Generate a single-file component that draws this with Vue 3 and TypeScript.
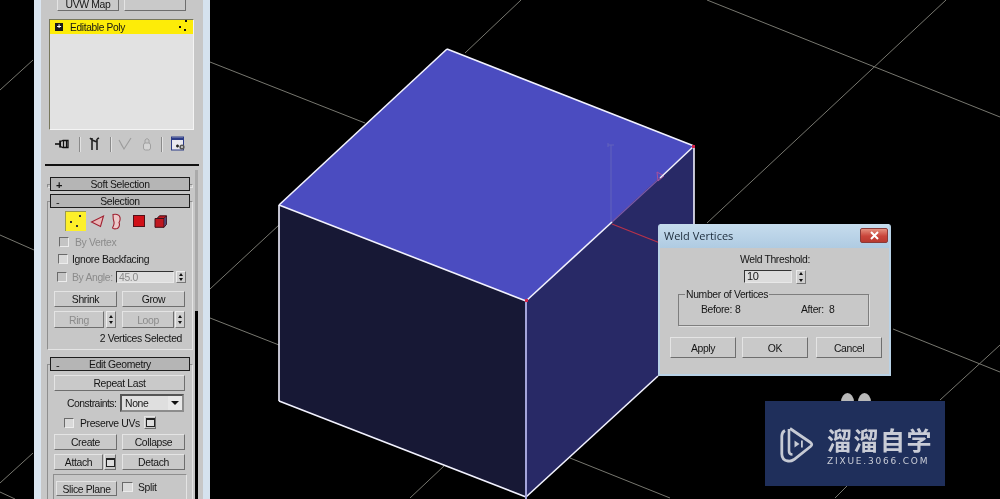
<script setup lang="ts">
// 视口里的栅格线，坐标就是内容本身
const gridLines: number[][] = [
  [0, 90, 33, 60],
  [0, 235, 34, 250],
  [0, 483, 33, 453],
  [0, 492, 15, 499],
  [210, 62, 365, 123],
  [465, 53, 521, 0],
  [210, 289, 279, 225],
  [210, 318, 279, 345],
  [410, 498, 444, 466],
  [570, 458, 670, 498],
  [707, 0, 1000, 117],
  [946, 0, 707, 223],
  [893, 329, 1000, 372],
  [1000, 345, 940, 400],
  [847, 486, 835, 498],
];
const cubeEdges: number[][] = [
  [447, 49, 694, 146],
  [447, 49, 279, 205],
  [694, 146, 660, 178],
  [279, 205, 526, 301],
  [526, 301, 612, 222],
  [279, 205, 279, 401],
  [279, 401, 526, 497],
  [526, 497, 658, 376],
  [694, 146, 694, 224],
];
</script>

<template>
  <div class="screen">
    <svg class="viewport" width="1000" height="499" viewBox="0 0 1000 499">
      <line v-for="(l, i) in gridLines" :key="'g' + i" :x1="l[0]" :y1="l[1]" :x2="l[2]" :y2="l[3]" stroke="#77776f" stroke-width="1"/>
      <polygon points="447,49 694,146 526,301 279,205" fill="#4b4cc0"/>
      <polygon points="279,205 526,301 526,497 279,401" fill="#171835"/>
      <polygon points="526,301 694,146 694,343 526,497" fill="#282966"/>
      <line x1="612" y1="222" x2="660" y2="178" stroke="#7c5aa8" stroke-width="1.2"/>
      <line x1="611" y1="145" x2="611" y2="223" stroke="#6262bc" stroke-width="1"/>
      <path d="M608 145h6M608 143v4" stroke="#6262bc" stroke-width="1" fill="none"/>
      <path d="M657 172l7 4-6 5z" stroke="#a8509c" stroke-width="1" fill="none"/>
      <line x1="612" y1="224" x2="660" y2="243" stroke="#b8324a" stroke-width="1.2"/>
      <line v-for="(l, i) in cubeEdges" :key="'e' + i" :x1="l[0]" :y1="l[1]" :x2="l[2]" :y2="l[3]" stroke="#f2f2ff" stroke-width="1.6"/>
      <line x1="526" y1="302" x2="526" y2="499" stroke="#a4a4da" stroke-width="2"/>
      <rect x="525" y="299" width="3" height="3" fill="#d8254a"/>
      <rect x="692" y="145" width="3" height="3" fill="#d8254a"/>
    </svg>

    <aside class="cmd-panel">
      <div class="cmd-edge"></div>
      <div class="cmd-body">
        <div class="mod-buttons">
          <div class="btn mod-btn">UVW Map</div>
          <div class="btn mod-btn"></div>
        </div>

        <div class="stack-list">
          <div class="stack-row">
            <span class="stack-plus">+</span>
            <span class="stack-name">Editable Poly</span>
            <svg class="stack-dots" width="20" height="14" viewBox="0 0 20 14">
              <rect x="14" y="1" width="2" height="2" fill="#111"/>
              <rect x="8" y="7" width="2" height="2" fill="#111"/>
              <rect x="13" y="10" width="2" height="2" fill="#111"/>
            </svg>
          </div>
        </div>

        <div class="stack-tools">
          <svg width="16" height="16" viewBox="0 0 16 16">
            <path d="M1 8h5" stroke="#111" stroke-width="1.6" fill="none"/>
            <path d="M6 4.500v7" stroke="#111" stroke-width="1.6" fill="none"/>
            <path d="M6.500 5.500L9 4.500h5v7H9l-2.500-1z" fill="#ddd" stroke="#111" stroke-width="1.3"/>
            <path d="M9.500 5v6M12.500 5v6" stroke="#111" stroke-width="1.400"/>
          </svg>
          <i class="tool-sep"></i>
          <svg width="12" height="16" viewBox="0 0 12 16">
            <path d="M3 2v12M8 3v11M3 4l5 2M1 2l2 2M8 3l2-1" stroke="#222" stroke-width="1.6" fill="none"/>
          </svg>
          <i class="tool-sep"></i>
          <svg width="15" height="16" viewBox="0 0 15 16">
            <path d="M1 4l5 9 7-11M3 8l3 5" stroke="#9c9c9c" stroke-width="1.1" fill="none"/>
          </svg>
          <svg width="10" height="16" viewBox="0 0 10 16">
            <path d="M3 7V4q2-3 4 0v3" stroke="#a0a0a0" fill="none"/>
            <rect x="1.5" y="7" width="7" height="7" rx="2" fill="#d4d4d4" stroke="#a0a0a0"/>
          </svg>
          <i class="tool-sep"></i>
          <svg width="15" height="16" viewBox="0 0 15 16">
            <rect x="0.5" y="1" width="12" height="13" fill="#e8e8f0" stroke="#2c3c88"/>
            <rect x="1" y="1.5" width="11" height="2.5" fill="#2c3c88"/>
            <path d="M5 10h3M6.500 8.500v3" stroke="#222" stroke-width="1.4"/>
            <circle cx="11" cy="11" r="2.600" fill="#555"/>
            <circle cx="11" cy="11" r="1" fill="#ddd"/>
          </svg>
        </div>
        <div class="stack-rule"></div>

        <div class="rollout-area">
          <div class="rollouts">
            <section class="rollout closed">
              <div class="bar"><b class="plus">+</b><span>Soft Selection</span></div>
            </section>

            <section class="rollout">
              <div class="bar"><b>-</b><span>Selection</span></div>
              <div class="sel-icons">
                <svg class="sel-active" width="21" height="20" viewBox="0 0 21 20">
                  <rect x="14" y="4" width="2" height="2" fill="#333"/>
                  <rect x="5" y="10" width="2" height="2" fill="#333"/>
                  <rect x="11" y="14" width="2" height="2" fill="#333"/>
                </svg>
                <svg width="15" height="14" viewBox="0 0 15 14">
                  <path d="M1.500 8L13.500 2 10.500 12.500z" fill="#e8b8b8" stroke="#a02030" stroke-width="1.1"/>
                </svg>
                <svg width="11" height="17" viewBox="0 0 11 17">
                  <path d="M2 1.500q6-1 7 3 .5 3-1 5 1.500 3.500-1.500 6-4 1-5-.5 2-3.500 1.500-6Q2 6 2 1.500z" fill="#eccaca" stroke="#a02030" stroke-width="1.1"/>
                </svg>
                <svg width="12" height="12" viewBox="0 0 12 12">
                  <rect x="0.500" y="0.500" width="11" height="11" fill="#d01018" stroke="#501018"/>
                </svg>
                <svg width="13" height="13" viewBox="0 0 13 13">
                  <path d="M3 3.500L5.500.8h7v8.500L10 12.300H1V3.500z" fill="#c01820" stroke="#40101a"/>
                  <path d="M1 3.500h9V12.300M10 3.500l2.500-2.700" stroke="#40101a" fill="none"/>
                  <path d="M10.300 3.800l2-2.400v7.700l-2 2.500z" fill="#4a4a7a"/>
                </svg>
              </div>
              <div class="opt-row by-vertex"><i class="check off"></i><span class="off-text">By Vertex</span></div>
              <div class="opt-row ignore"><i class="check"></i><span>Ignore Backfacing</span></div>
              <div class="opt-row by-angle">
                <i class="check off"></i><span class="off-text angle-label">By Angle:</span>
                <div class="field off-text angle-field">45.0</div>
                <div class="spin"></div>
              </div>
              <div class="btn-row first">
                <div class="btn half">Shrink</div>
                <div class="btn half">Grow</div>
              </div>
              <div class="btn-row ring-row">
                <div class="btn off-text ring">Ring</div>
                <div class="spin tall"></div>
                <div class="btn off-text loop">Loop</div>
                <div class="spin tall loop-spin"></div>
              </div>
              <div class="status">2 Vertices Selected</div>
            </section>

            <section class="rollout geometry">
              <div class="bar"><b>-</b><span>Edit Geometry</span></div>
              <div class="btn wide">Repeat Last</div>
              <div class="constraints">
                <span class="constraints-label">Constraints:</span>
                <div class="select"><span>None</span><i class="arrow"></i></div>
              </div>
              <div class="preserve">
                <i class="check"></i><span class="preserve-label">Preserve UVs</span>
                <div class="win-btn"><i></i></div>
              </div>
              <div class="btn-row create-row">
                <div class="btn half">Create</div>
                <div class="btn half">Collapse</div>
              </div>
              <div class="btn-row attach-row">
                <div class="btn attach">Attach</div>
                <div class="win-btn attach-win"><i></i></div>
                <div class="btn half detach">Detach</div>
              </div>
              <div class="slice-group">
                <div class="btn slice">Slice Plane</div>
                <i class="check split-check"></i><span class="split-label">Split</span>
              </div>
            </section>
          </div>
          <div class="scroller"><div class="scroll-thumb"></div></div>
        </div>
      </div>
      <div class="cmd-edge right"></div>
    </aside>

    <div class="dialog">
      <header class="dlg-title">
        <span>Weld Vertices</span>
        <div class="dlg-close">
          <svg width="11" height="9" viewBox="0 0 11 9"><path d="M2 1l7 7M9 1L2 8" stroke="#fff" stroke-width="2"/></svg>
        </div>
      </header>
      <div class="dlg-client">
        <div class="dlg-label">Weld Threshold:</div>
        <div class="dlg-threshold">
          <div class="field dlg-field">10</div>
          <div class="spin"></div>
        </div>
        <fieldset class="dlg-group">
          <legend>Number of Vertices</legend>
          <div class="dlg-counts">
            <span class="count-before">Before:</span><span class="count-num">8</span>
            <span class="count-after">After:</span><span class="count-num">8</span>
          </div>
        </fieldset>
        <div class="dlg-buttons">
          <div class="btn">Apply</div>
          <div class="btn">OK</div>
          <div class="btn">Cancel</div>
        </div>
      </div>
    </div>

    <i class="ear left-ear"></i><i class="ear right-ear"></i>
    <div class="watermark">
      <svg class="wm-icon" width="34" height="37" viewBox="0 0 34 37">
        <path d="M10 2.500L30.500 16.500Q33 18.500 30.500 20.500L14 33.500Q11 35.500 8 35Q2 34.500 1.800 28V10Q2 6 5 4.500" fill="none" stroke="#c6cad4" stroke-width="2.800"/>
        <path d="M9 3V25Q9 28.500 12.500 28.500" fill="none" stroke="#c6cad4" stroke-width="2.600"/>
        <path d="M14.500 14.500L19.500 18 14.500 21.500z" fill="#c6cad4"/>
        <rect x="21" y="14.500" width="1.800" height="7" fill="#c6cad4"/>
      </svg>
      <div class="wm-text">
        <div class="wm-name">溜溜自学</div>
        <div class="wm-url">ZIXUE.3066.COM</div>
      </div>
    </div>
  </div>
</template>

<style scoped>
.screen {
  position: relative;
  display: flex;
  width: 1000px;
  height: 499px;
  padding-left: 34px;
  box-sizing: border-box;
  overflow: hidden;
  background: #000;
  font-family: "Liberation Sans", Arial, sans-serif;
  font-size: 10.4px;
  letter-spacing: -0.35px;
  color: #151515;
  filter: blur(0.3px);
}

.viewport {
  position: absolute;
  left: 0;
  top: 0;
}

.cmd-panel {
  position: relative;
  display: flex;
  width: 176px;
  height: 499px;
  flex: none;
  overflow: hidden;
}

.cmd-edge {
  width: 7px;
  background: #dbe6f1;
  flex: none;
}

.cmd-edge.right {
  width: 7px;
  background: #d5e2ee;
}

.cmd-body {
  width: 162px;
  background: #c7c7c7;
}

.btn {
  display: flex;
  align-items: center;
  justify-content: center;
  box-sizing: border-box;
  padding-top: 1px;
  background: #c9c9c9;
  border: 1px solid;
  border-color: #e4e4e4 #6e6e6e #6e6e6e #e4e4e4;
  white-space: nowrap;
}

.mod-buttons {
  display: flex;
  gap: 5px;
  height: 11px;
  margin-left: 16px;
}

.mod-btn {
  width: 62px;
  border-top: 0;
  align-items: flex-end;
  line-height: 10px;
}

.stack-list {
  box-sizing: border-box;
  width: 145px;
  height: 111px;
  margin: 8px 0 0 8px;
  background: #e2e2e2;
  border: 1px solid;
  border-color: #77775c #f4f4f4 #f4f4f4 #77775c;
}

.stack-row {
  position: relative;
  display: flex;
  align-items: center;
  height: 14px;
  background: #fdec08;
}

.stack-plus {
  width: 8px;
  height: 8px;
  margin-left: 5px;
  background: #1a1a1a;
  color: #fff;
  font: bold 8px/8px "Liberation Sans", sans-serif;
  text-align: center;
}

.stack-name {
  margin-left: 7px;
  font-size: 10.200px;
}

.stack-dots {
  position: absolute;
  right: 2px;
  top: -1px;
}

.stack-tools {
  display: flex;
  align-items: center;
  height: 16px;
  margin: 6px 0 0 13px;
}

.stack-tools > svg:nth-of-type(2) {
  margin-left: 9px;
}

.stack-tools > svg:nth-of-type(3) {
  margin-left: 7px;
}

.stack-tools > svg:nth-of-type(4) {
  margin-left: 9px;
}

.stack-tools > svg:nth-of-type(5) {
  margin-left: 9px;
}

.tool-sep {
  width: 1px;
  height: 15px;
  margin-left: 9px;
  background: #8a8a8a;
  box-shadow: 1px 0 #e2e2e2;
}

.stack-rule {
  width: 154px;
  height: 2px;
  margin: 12px 0 0 4px;
  background: #111;
}

.rollout-area {
  display: flex;
}

.rollouts {
  width: 154px;
  padding-top: 11px;
}

.rollout {
  position: relative;
  box-sizing: border-box;
  width: 146px;
  margin-left: 6px;
  padding-bottom: 5px;
}

.rollout::before {
  content: "";
  position: absolute;
  left: 0;
  right: 0;
  top: 7px;
  bottom: 0;
  border: 1px solid;
  border-color: #8e8e8e #e4e4e4 #e4e4e4 #8e8e8e;
}

.rollout > * {
  position: relative;
}

.rollout.closed {
  padding-bottom: 3px;
  height: 17px;
}

.rollout.closed::before {
  bottom: 6px;
}

.geometry {
  margin-top: 7px;
  height: 150px;
}

.bar {
  display: flex;
  align-items: center;
  justify-content: center;
  box-sizing: border-box;
  height: 14px;
  margin: 0 3px;
  padding-top: 1px;
  background: #b5b5b5;
  border: 1px solid #1d1d1d;
}

.bar b {
  position: absolute;
  left: 5px;
  font-weight: normal;
  font-size: 11px;
}

.bar b.plus {
  font-weight: bold;
}

.sel-icons {
  display: flex;
  align-items: center;
  height: 20px;
  margin-top: 3px;
  padding-left: 18px;
}

.sel-icons svg:nth-child(2) {
  margin-left: 4px;
}

.sel-icons svg:nth-child(3) {
  margin-left: 6px;
}

.sel-icons svg:nth-child(4) {
  margin-left: 11px;
}

.sel-icons svg:nth-child(5) {
  margin-left: 9px;
}

.sel-active {
  background: #fdf02a;
  box-shadow: inset 1px 1px #9a9a50;
}

.check {
  display: block;
  flex: none;
  box-sizing: border-box;
  width: 10px;
  height: 10px;
  background: #d9d9d9;
  border: 1px solid;
  border-color: #6a6a6a #ececec #ececec #6a6a6a;
}

.check.off {
  background: #c4c4c4;
}

.off-text {
  color: #8b8b8b;
}

.opt-row {
  display: flex;
  align-items: center;
  white-space: nowrap;
}

.opt-row span {
  padding-top: 1px;
}

.by-vertex {
  height: 10px;
  margin-top: 6px;
  padding-left: 12px;
  gap: 6px;
}

.ignore {
  height: 10px;
  margin-top: 7px;
  padding-left: 11px;
  gap: 4px;
}

.by-angle {
  height: 12px;
  margin-top: 7px;
  padding-left: 10px;
}

.angle-label {
  flex: none;
  width: 39px;
  margin: 0 5px;
}

.field {
  box-sizing: border-box;
  background: #dedede;
  border: 1px solid;
  border-color: #333 #e8e8e8 #e8e8e8 #333;
  line-height: 11px;
  padding-left: 2px;
}

.angle-field {
  width: 58px;
  height: 12px;
}

.spin {
  position: relative;
  flex: none;
  box-sizing: border-box;
  width: 10px;
  height: 12px;
  margin-left: 2px;
  background: #cfcfcf;
  border: 1px solid;
  border-color: #ececec #777 #777 #ececec;
}

.spin::before,
.spin::after {
  content: "";
  position: absolute;
  left: 1.500px;
  border-left: 2.500px solid transparent;
  border-right: 2.500px solid transparent;
}

.spin::before {
  top: 1px;
  border-bottom: 3px solid #111;
}

.spin::after {
  bottom: 1px;
  border-top: 3px solid #111;
}

.spin.tall {
  height: 17px;
}

.spin.tall::before {
  top: 3px;
}

.spin.tall::after {
  bottom: 3px;
}

.btn-row {
  display: flex;
  padding-left: 7px;
}

.btn-row.first {
  height: 16px;
  margin-top: 8px;
  gap: 5px;
}

.half {
  width: 63px;
}

.ring-row {
  height: 17px;
  margin-top: 4px;
}

.ring {
  width: 50px;
}

.loop {
  width: 52px;
  margin-left: 6px;
}

.loop-spin {
  margin-left: 1px;
}

.status {
  height: 12px;
  margin-top: 4px;
  padding-top: 1px;
  padding-right: 11px;
  line-height: 12px;
  text-align: right;
}

.wide {
  width: 131px;
  height: 16px;
  margin: 4px 0 0 7px;
}

.constraints {
  display: flex;
  align-items: center;
  height: 18px;
  margin-top: 3px;
  padding-left: 20px;
}

.constraints-label {
  flex: none;
  width: 48px;
  letter-spacing: -0.5px;
  white-space: nowrap;
}

.select {
  display: flex;
  align-items: center;
  box-sizing: border-box;
  flex: none;
  width: 64px;
  height: 18px;
  margin-left: 5px;
  padding-left: 3px;
  background: #dfdfdf;
  border: 2px solid;
  border-color: #555 #8c8c8c #8c8c8c #555;
}

.arrow {
  position: relative;
  margin-left: auto;
  width: 14px;
  height: 14px;
  background: #e8e8e8;
}

.arrow::after {
  content: "";
  position: absolute;
  left: 3px;
  top: 5px;
  border-left: 4px solid transparent;
  border-right: 4px solid transparent;
  border-top: 4px solid #111;
}

.preserve {
  display: flex;
  align-items: center;
  height: 13px;
  margin-top: 4px;
  padding-left: 17px;
  gap: 6px;
}

.preserve-label {
  flex: none;
  width: 57px;
  padding-top: 1px;
  white-space: nowrap;
}

.win-btn {
  display: flex;
  align-items: center;
  justify-content: center;
  box-sizing: border-box;
  flex: none;
  width: 12px;
  height: 13px;
  margin-left: 1px;
  background: #c9c9c9;
  border: 1px solid;
  border-color: #e4e4e4 #6e6e6e #6e6e6e #e4e4e4;
}

.win-btn i {
  display: block;
  box-sizing: border-box;
  width: 9px;
  height: 9px;
  background: #ddd;
  border: 1px solid #222;
  border-top-width: 2px;
}

.create-row {
  height: 16px;
  margin-top: 5px;
  gap: 5px;
}

.attach-row {
  height: 16px;
  margin-top: 4px;
}

.attach {
  width: 49px;
}

.attach-win {
  height: 16px;
  margin-left: 1px;
}

.detach {
  margin-left: 6px;
}

.slice-group {
  display: flex;
  align-items: flex-start;
  box-sizing: border-box;
  width: 134px;
  height: 40px;
  margin: 4px 0 0 6px;
  padding: 6px 0 0 2px;
  border: 1px solid;
  border-color: #8e8e8e #e4e4e4 #e4e4e4 #8e8e8e;
}

.slice {
  width: 61px;
  height: 15px;
}

.split-check {
  width: 11px;
  height: 10px;
  margin: 1px 5px 0 5px;
}

.split-label {
  padding-top: 1px;
}

.scroller {
  width: 3px;
  height: 332px;
  margin-top: 4px;
  background: #000;
}

.scroll-thumb {
  height: 141px;
  background: #aaa;
}

.dialog {
  position: absolute;
  left: 658px;
  top: 224px;
  box-sizing: border-box;
  width: 233px;
  height: 152px;
  background: #b9d2e6;
  border-radius: 3px 3px 0 0;
  padding: 0 2px 2px;
  font-size: 10.4px;
}

.dlg-title {
  display: flex;
  align-items: center;
  justify-content: space-between;
  height: 22px;
  padding: 0 1px 2px 4px;
  background: linear-gradient(#c6dced, #afcbe2);
  color: #1c2b3a;
  font-family: "Open Sans", "Liberation Sans", sans-serif;
  font-size: 11px;
  letter-spacing: 0;
}

.dlg-close {
  display: flex;
  align-items: center;
  justify-content: center;
  box-sizing: border-box;
  width: 28px;
  height: 15px;
  background: linear-gradient(#e58f7e, #c9443a 55%, #b83a30);
  border: 1px solid #8a3a38;
  border-radius: 2px;
}

.dlg-client {
  height: 126px;
  padding-top: 6px;
  box-sizing: border-box;
  background: #c8c8c8;
}

.dlg-label {
  height: 12px;
  line-height: 12px;
  text-align: center;
  padding-left: 1px;
}

.dlg-threshold {
  display: flex;
  height: 13px;
  margin: 4px 0 0 84px;
}

.dlg-field {
  width: 48px;
  height: 13px;
  font-size: 11px;
  background: #dcdcdc;
}

.dlg-threshold .spin {
  height: 14px;
  margin-left: 4px;
}

.dlg-group {
  box-sizing: border-box;
  width: 191px;
  height: 37px;
  margin: 6px 0 0 18px;
  padding: 0;
  border: 1px solid #7e7e7e;
  border-radius: 0;
  box-shadow: 1px 1px #dedede;
}

.dlg-group legend {
  margin-left: 6px;
  padding: 0 1px;
  line-height: 11px;
}

.dlg-counts {
  display: flex;
  height: 14px;
  padding-top: 3px;
  line-height: 14px;
}

.count-before {
  width: 34px;
  margin-left: 22px;
}

.count-after {
  width: 28px;
  margin-left: 60px;
}

.count-num {
  width: 6px;
}

.dlg-buttons {
  display: flex;
  margin: 11px 0 0 10px;
}

.dlg-buttons .btn {
  width: 66px;
  height: 21px;
}

.dlg-buttons .btn + .btn {
  margin-left: 6px;
}

.dlg-buttons .btn:last-child {
  margin-left: 8px;
}

.ear {
  position: absolute;
  top: 393px;
  width: 13px;
  height: 18px;
  border-radius: 50%;
  background: #b9b9b9;
}

.left-ear {
  left: 841px;
}

.right-ear {
  left: 858px;
}

.watermark {
  position: absolute;
  left: 765px;
  top: 401px;
  display: flex;
  box-sizing: border-box;
  width: 180px;
  height: 85px;
  padding: 25px 0 0 15px;
  background: #1f2f5b;
  color: #c9ccd6;
  letter-spacing: 0;
}

.wm-text {
  margin-left: 13px;
}

.wm-name {
  height: 29px;
  margin-top: -1px;
  font-family: "Noto Sans CJK SC", sans-serif;
  font-size: 25px;
  font-weight: 700;
  line-height: 29px;
  letter-spacing: 1.500px;
  white-space: nowrap;
}

.wm-url {
  margin-top: 2px;
  font-family: "DejaVu Sans", sans-serif;
  font-size: 9px;
  line-height: 10px;
  letter-spacing: 1.800px;
  white-space: nowrap;
}
</style>
